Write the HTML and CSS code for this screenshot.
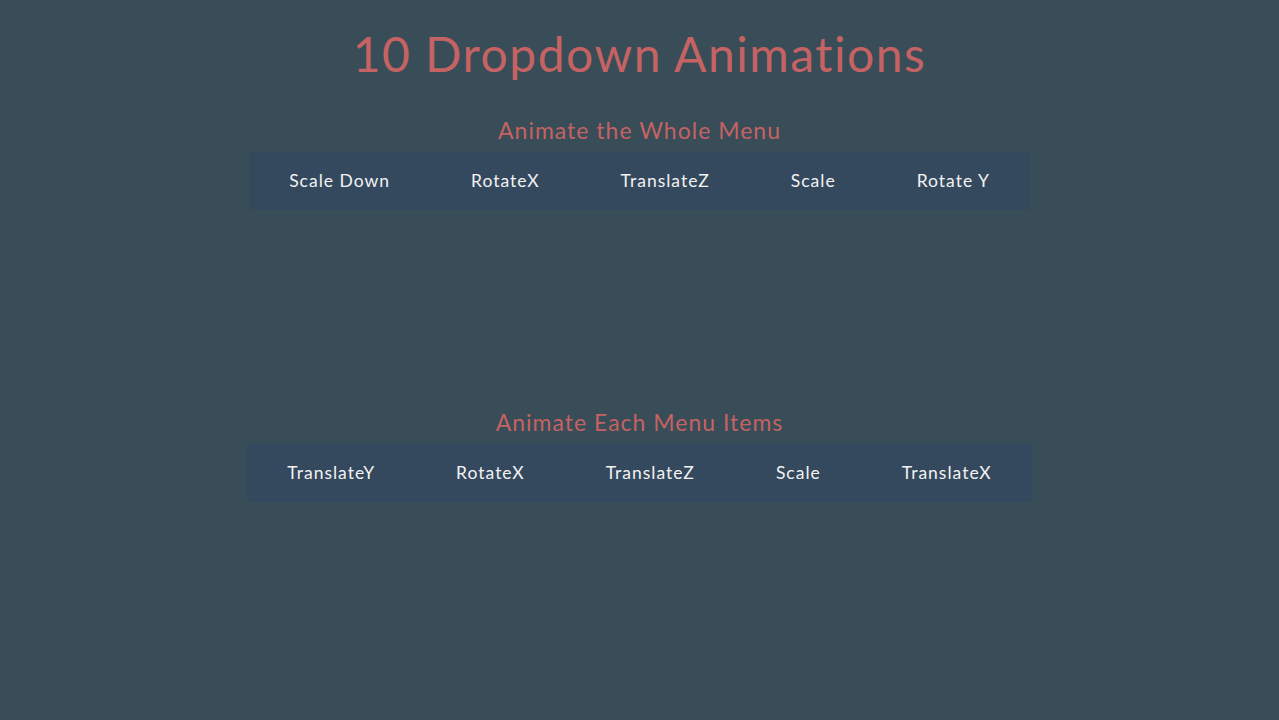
FILE: index.html
```html
<!DOCTYPE html>
<html lang="en">
<head>
<meta charset="utf-8">
<title>10 Dropdown Animations</title>
<link rel="stylesheet" href="styles.css">
</head>
<body>
  <h1 class="title">10 Dropdown Animations</h1>

  <section class="demo demo-menu">
    <h2 class="demo-heading">Animate the Whole Menu</h2>
    <nav class="menu">
      <ul class="menu-list">
        <li class="menu-item">Scale Down</li>
        <li class="menu-item">RotateX</li>
        <li class="menu-item">TranslateZ</li>
        <li class="menu-item">Scale</li>
        <li class="menu-item">Rotate Y</li>
      </ul>
    </nav>
  </section>

  <section class="demo demo-items">
    <h2 class="demo-heading">Animate Each Menu Items</h2>
    <nav class="menu">
      <ul class="menu-list">
        <li class="menu-item">TranslateY</li>
        <li class="menu-item">RotateX</li>
        <li class="menu-item">TranslateZ</li>
        <li class="menu-item">Scale</li>
        <li class="menu-item">TranslateX</li>
      </ul>
    </nav>
  </section>
</body>
</html>
```

FILE: styles.css
```css
* {
  box-sizing: border-box;
}

body {
  margin: 0;
  min-height: 720px;
  background: #384d57;
  font-family: "Lato", "Open Sans", sans-serif;
  display: flex;
  flex-direction: column;
  align-items: center;
}

.title {
  margin: 24px 0 31px;
  font-size: 48px;
  line-height: 60px;
  font-weight: 400;
  color: #c56263;
  letter-spacing: 1.5px;
}

.demo {
  display: flex;
  flex-direction: column;
  align-items: center;
}

.demo-menu {
  margin-bottom: 197px;
}

.demo-heading {
  margin: 0 0 7px;
  font-size: 23px;
  line-height: 30px;
  font-weight: 400;
  color: #c56263;
  letter-spacing: 1px;
}

.menu {
  background: #34495e;
}

.menu-list {
  list-style: none;
  margin: 0;
  padding: 0;
  display: flex;
  gap: 1px;
}

.menu-item {
  padding: 0 40px;
  line-height: 58px;
  font-size: 17.5px;
  color: #f2f2f2;
  letter-spacing: 1px;
}
```
